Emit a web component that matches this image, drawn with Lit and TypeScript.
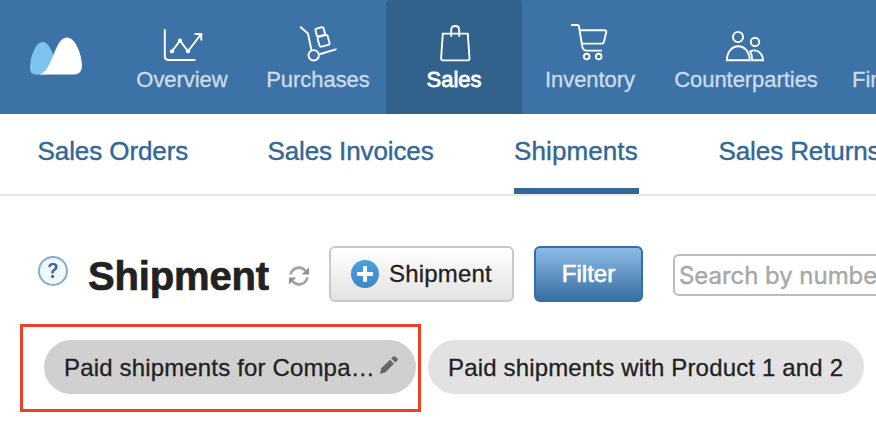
import { LitElement, html, svg, css } from "lit";
import { customElement } from "lit/decorators.js";

const icons = {
  overview: svg`<path d="M4.8 7.2V34.6Q4.8 38 8.2 38H35.5"/><path d="M12 29.3L20 18.7L28 29.3L41.2 12M34.5 12H41.3V18.5"/><circle class="dot" cx="12" cy="29.3" r="2.1"/><circle class="dot" cx="20" cy="18.7" r="2.1"/><circle class="dot" cx="28" cy="29.3" r="2.1"/>`,
  purchases: svg`<path class="round" d="M4.7 5.2L12 11.5L15.3 27.5M24.4 32L39.8 27.3"/><circle cx="17.7" cy="33.3" r="5.2"/><rect x="-4.2" y="-4" width="8.4" height="8" rx="1.6" transform="translate(24.2 9.8) rotate(-15)"/><rect x="-5.2" y="-5" width="10.4" height="10" rx="1.8" transform="translate(27.6 18.9) rotate(-15)"/>`,
  sales: svg`<path d="M10.8 11.6H35.8L37.5 36.2Q37.6 38.4 35.4 38.4H11.2Q9 38.4 9.1 36.2Z"/><path d="M19.2 14.7V8.2Q19.2 4 23.2 4T27.2 8.2V14.7"/>`,
  inventory: svg`<path d="M3 3H9.3Q10.8 3 11 4.5L14.3 24.6Q15.2 28.6 18.6 28.6H34"/><path d="M12 8.2H36.5Q38.6 8.2 38.2 10.2L36 19.4Q35.4 21.6 33.4 21.6H14"/><circle cx="18.7" cy="34.6" r="2.8"/><circle cx="30.7" cy="34.6" r="2.8"/>`,
  people: svg`<circle cx="14" cy="15" r="5.1"/><path d="M2.8 38.3C3 29.8 8 24.2 14.3 24.2S25.6 29.8 25.8 38.3Z"/><circle cx="31" cy="19.9" r="4.2"/><path d="M26.3 29.4C33 26.3 38.8 31.2 39 38.3H28.2C28.2 34.5 27.6 32 26.3 29.4Z"/>`,
};

@customElement("app-root")
export class AppRoot extends LitElement {
  static styles = css`
    :host { display: block; position: relative; width: 876px; height: 428px; overflow: hidden; background: #fff;
      color: #222; font-family: "Liberation Sans", Arial, sans-serif; white-space: nowrap; }
    * { box-sizing: border-box; }
    svg { display: block; flex: none; }
    .nav { display: flex; height: 114px; background: #3c72a5; }
    .logo { width: 114px; padding: 36px 0 0 28px; flex: none; }
    .tab { width: 136px; flex: none; display: flex; flex-direction: column; align-items: center; padding-top: 22px;
      font-size: 22px; line-height: 28px; color: #cbdceb; -webkit-text-stroke: .35px #cbdceb; letter-spacing: -.05px; }
    .tab.wide { width: 176px; }
    .tab.cut { align-items: flex-start; padding: 66px 0 0 18px; }
    .tab.active { background: #31628b; border-radius: 4px 4px 0 0; color: #fff; -webkit-text-stroke: .8px #fff; }
    .icon { fill: none; stroke: #fff; stroke-width: 1.9; }
    .dot { fill: #fff; stroke: none; }
    .round { stroke-linecap: round; }
    .sub { display: flex; height: 82px; border-bottom: 2px solid #e9e9e9; padding-left: 37px;
      font-size: 26px; color: #336795; line-height: 30px; letter-spacing: -.1px; -webkit-text-stroke: .4px #336795; }
    .link { padding-top: 22px; flex: none; height: 80px; }
    .l1 { width: 230px; padding-left: .6px; }
    .l2 { width: 247px; padding-left: .4px; }
    .l3 { width: 125px; margin-right: 79.5px; border-bottom: 6px solid #336795; letter-spacing: .1px; }
    .bar { display: flex; align-items: flex-start; height: 106px; padding: 50px 0 0 38px; }
    .help { width: 30px; height: 30px; margin: 10px 20px 0 0; border: 2px solid #82acd0; border-radius: 50%; background: #f0f7fd;
      color: #336795; font: 600 20px/27px Inter, sans-serif; text-align: center; flex: none; }
    h1 { margin: 7px 0 0; width: 201px; font-size: 40px; line-height: 46px; font-weight: 700; letter-spacing: -.15px; flex: none; -webkit-text-stroke: .7px #222; }
    .refresh { width: 40px; padding-top: 20px; flex: none; }
    .btn { display: flex; align-items: center; height: 56px; border: 2px solid #c9c9c9; border-radius: 6px; font-size: 24px;
      background: linear-gradient(#fff, #e3e3e3); flex: none; }
    .add { width: 185px; padding-left: 20px; gap: 10px; letter-spacing: .2px; -webkit-text-stroke: .3px #222; }
    .add svg { margin-bottom: 1px; }
    .filter { width: 109px; margin: 0 30px 0 20px; justify-content: center; border-color: #3470a6; color: #fff;
      background: linear-gradient(#8dbbe5, #386fa3); -webkit-text-stroke: .6px #fff; }
    .search { width: 260px; height: 42px; margin-top: 8px; border: 2px solid #bbb; border-radius: 6px; padding-left: 4px;
      font: 400 24px/39px Inter, sans-serif; letter-spacing: -.05px; color: #a8a8a8; -webkit-text-stroke: .4px #a8a8a8; flex: none; }
    .chips { display: flex; gap: 12px; padding: 38px 0 0 44px; font-size: 24px; line-height: 56px; letter-spacing: .16px; -webkit-text-stroke: .3px #222; }
    .chip { height: 54px; border-radius: 27px; padding-left: 20px; background: #e2e2e2; width: 436px; flex: none; }
    .chip.on { width: 372px; background: #d0d0d0; display: flex; align-items: flex-start; }
    .name { width: 315px; }
    .pencil { margin-top: 15px; }
    .mark { position: absolute; left: 20px; top: 324px; width: 401px; height: 88px; border: 3px solid #ee4026; }
  `;

  private tab(label: string, art: unknown, mod = "") {
    return html`<div class="tab ${mod}"><svg class="icon" width="44" height="44" viewBox="0 0 44 44">${art}</svg><span>${label}</span></div>`;
  }

  render() {
    return html`
      <nav class="nav">
        <div class="logo">
          <svg width="56" height="40" viewBox="0 0 56 40">
            <path fill="#7bc4ef" d="M7.5 38.5Q2 38.5 2 32C2 21 7.5 6 14.5 6S26 20 29 30L18 38.5Z"/>
            <path fill="#fff" d="M11 38.5C25 36.5 26 1.5 38.8 1.5C48 1.5 54 20 54 29.5Q54 38.5 46 38.5Z"/>
          </svg>
        </div>
        ${this.tab("Overview", icons.overview)}
        ${this.tab("Purchases", icons.purchases)}
        ${this.tab("Sales", icons.sales, "active")}
        ${this.tab("Inventory", icons.inventory)}
        ${this.tab("Counterparties", icons.people, "wide")}
        <div class="tab cut"><span>Finance</span></div>
      </nav>
      <div class="sub">
        <div class="link l1">Sales Orders</div>
        <div class="link l2">Sales Invoices</div>
        <div class="link l3">Shipments</div>
        <div class="link">Sales Returns</div>
      </div>
      <div class="bar">
        <div class="help">?</div>
        <h1>Shipment</h1>
        <div class="refresh">
          <svg width="20" height="20" viewBox="0 0 20 20">
            <g fill="none" stroke="#a2a2a2" stroke-width="2.6"><path d="M1.5 8.5C3.5 1 12.5-.5 16.5 5"/><path d="M18.5 11.5C16.5 19 7.5 20.5 3.5 15"/></g>
            <path fill="#929292" d="M20 1.5V8.5H12.5ZM0 18.5V11.5H7.5Z"/>
          </svg>
        </div>
        <div class="btn add">
          <svg width="28" height="28" viewBox="0 0 28 28">
            <defs><linearGradient id="g" x1="0" y1="0" x2="0" y2="1"><stop stop-color="#4ba0df"/><stop offset="1" stop-color="#3d87c3"/></linearGradient></defs>
            <circle cx="14" cy="14" r="14" fill="url(#g)"/><path d="M14 6V22M6 14H22" stroke="#fff" stroke-width="4"/>
          </svg>
          <span>Shipment</span>
        </div>
        <div class="btn filter">Filter</div>
        <div class="search">Search by number</div>
      </div>
      <div class="chips">
        <div class="chip on">
          <span class="name">Paid shipments for Compa…</span>
          <svg class="pencil" width="20" height="20" viewBox="0 0 20 20" fill="#666">
            <path d="M1 19L2.3 13.2L11 4.8L15 8.8L6.5 17.3Z"/><path d="M12.2 3.5L14.2 1.6Q15.5.6 16.8 1.8L18.4 3.4Q19.5 4.7 18.3 5.8L16.3 7.6Z"/>
          </svg>
        </div>
        <div class="chip">Paid shipments with Product 1 and 2</div>
      </div>
      <div class="mark"></div>
    `;
  }
}
